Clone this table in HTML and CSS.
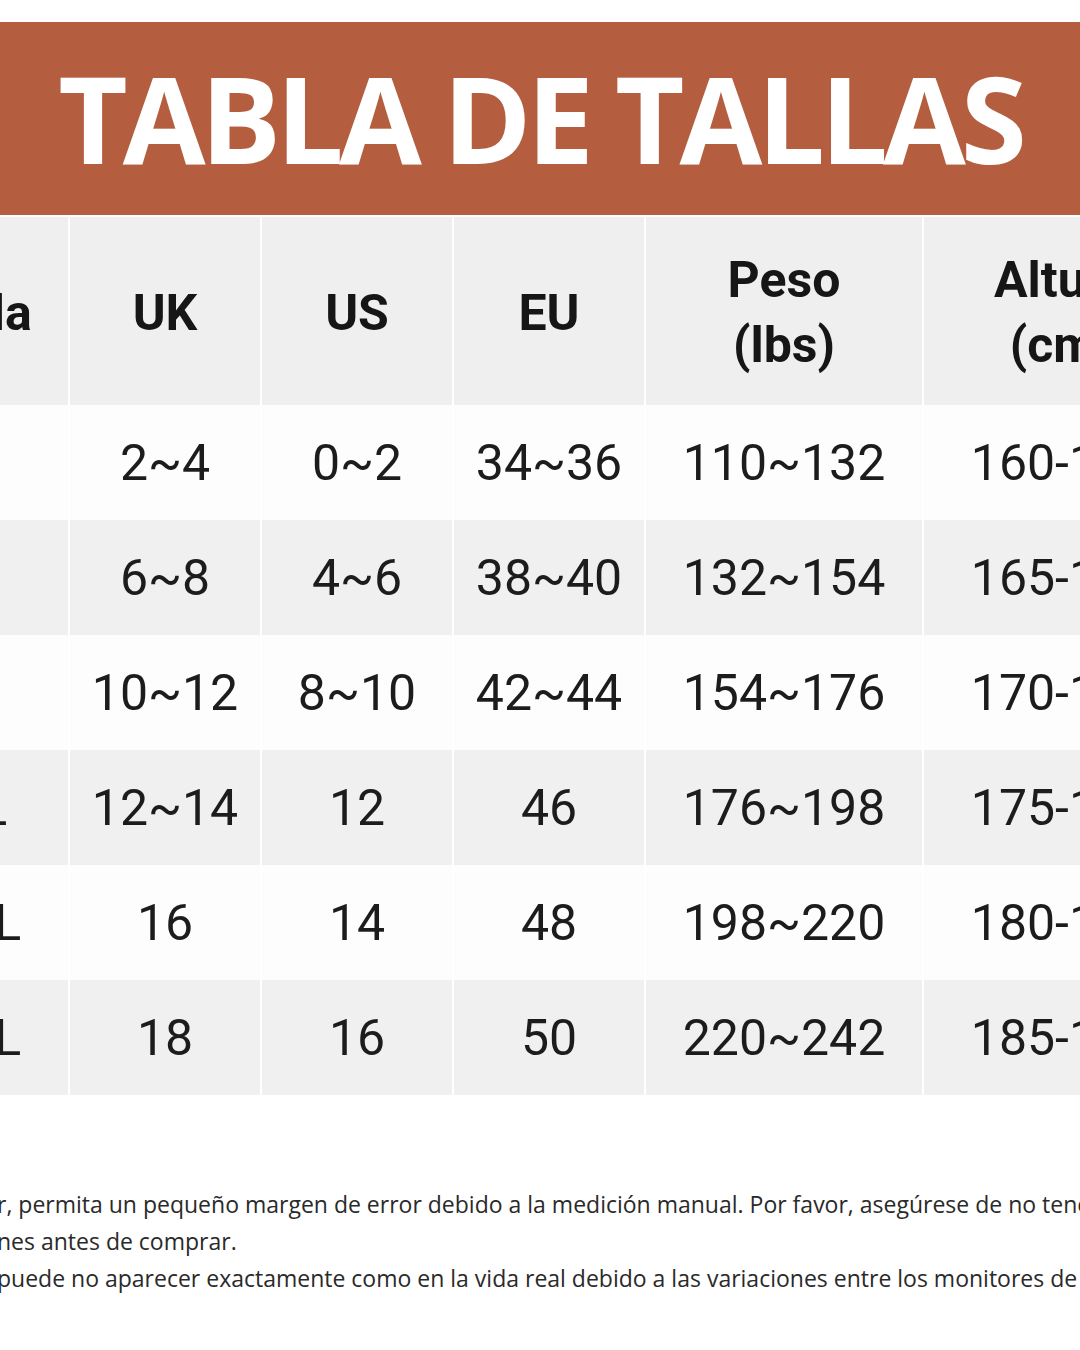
FILE: index.html
```html
<!DOCTYPE html>
<html lang="es">
<head>
<meta charset="utf-8">
<title>Tabla de tallas</title>
<link rel="stylesheet" href="styles.css">
</head>
<body>
<div class="page">
  <header class="banner">
    <h1 class="title">TABLA DE TALLAS</h1>
  </header>

  <div class="table">
    <div class="cell head first">Talla</div>
    <div class="cell head">UK</div>
    <div class="cell head">US</div>
    <div class="cell head">EU</div>
    <div class="cell head">Peso<br>(lbs)</div>
    <div class="cell head">Altura<br>(cm)</div>

    <div class="cell first">S</div>
    <div class="cell">2~4</div>
    <div class="cell">0~2</div>
    <div class="cell">34~36</div>
    <div class="cell">110~132</div>
    <div class="cell">160-165</div>

    <div class="cell alt first">M</div>
    <div class="cell alt">6~8</div>
    <div class="cell alt">4~6</div>
    <div class="cell alt">38~40</div>
    <div class="cell alt">132~154</div>
    <div class="cell alt">165-170</div>

    <div class="cell first">L</div>
    <div class="cell">10~12</div>
    <div class="cell">8~10</div>
    <div class="cell">42~44</div>
    <div class="cell">154~176</div>
    <div class="cell">170-175</div>

    <div class="cell alt first">XL</div>
    <div class="cell alt">12~14</div>
    <div class="cell alt">12</div>
    <div class="cell alt">46</div>
    <div class="cell alt">176~198</div>
    <div class="cell alt">175-180</div>

    <div class="cell first">2XL</div>
    <div class="cell">16</div>
    <div class="cell">14</div>
    <div class="cell">48</div>
    <div class="cell">198~220</div>
    <div class="cell">180-185</div>

    <div class="cell alt first">3XL</div>
    <div class="cell alt">18</div>
    <div class="cell alt">16</div>
    <div class="cell alt">50</div>
    <div class="cell alt">220~242</div>
    <div class="cell alt">185-190</div>
  </div>

  <div class="notes">
    <p class="note">r, permita un pequeño margen de error debido a la medición manual. Por favor, asegúrese de no tener objeciones</p>
    <p class="note">nes antes de comprar.</p>
    <p class="note">puede no aparecer exactamente como en la vida real debido a las variaciones entre los monitores de computadora.</p>
  </div>
</div>
</body>
</html>
```

FILE: styles.css
```css
html, body {
  margin: 0;
  padding: 0;
  background: #ffffff;
}

.page {
  width: 1080px;
  height: 1350px;
  overflow: hidden;
  background: #ffffff;
  padding-top: 22px;
  box-sizing: border-box;
}

.banner {
  height: 193px;
  background: #b45e3f;
  display: flex;
  align-items: center;
  justify-content: center;
}

.title {
  margin: 0;
  font-family: "Open Sans", "Liberation Sans", sans-serif;
  font-weight: 700;
  font-size: 120px;
  line-height: 1;
  letter-spacing: -5px;
  color: #ffffff;
  white-space: nowrap;
  padding-bottom: 2px;
}

.table {
  margin-top: 2px;
  margin-left: -124px;
  width: 1324px;
  display: grid;
  grid-template-columns: 192px 190px 190px 190px 276px 276px;
  grid-template-rows: 188px repeat(6, 115px);
  column-gap: 2px;
  background: #ffffff;
}

.cell {
  display: flex;
  align-items: center;
  justify-content: center;
  text-align: center;
  font-family: Roboto, "Liberation Sans", sans-serif;
  font-size: 50px;
  font-weight: 400;
  color: #1c1c1c;
  background: #fdfdfd;
  white-space: nowrap;
}

.cell.first {
  padding-left: 12px;
}

.cell.alt {
  background: #f0f0f0;
}

.cell.head {
  background: #efefef;
  font-weight: 700;
  line-height: 65px;
  color: #161616;
  padding-top: 4px;
}

.notes {
  margin-top: 91px;
  margin-left: -3px;
}

.note {
  margin: 0;
  font-family: "Open Sans", "Liberation Sans", sans-serif;
  font-size: 23px;
  line-height: 37px;
  color: #2a2a2a;
  white-space: nowrap;
}
```
